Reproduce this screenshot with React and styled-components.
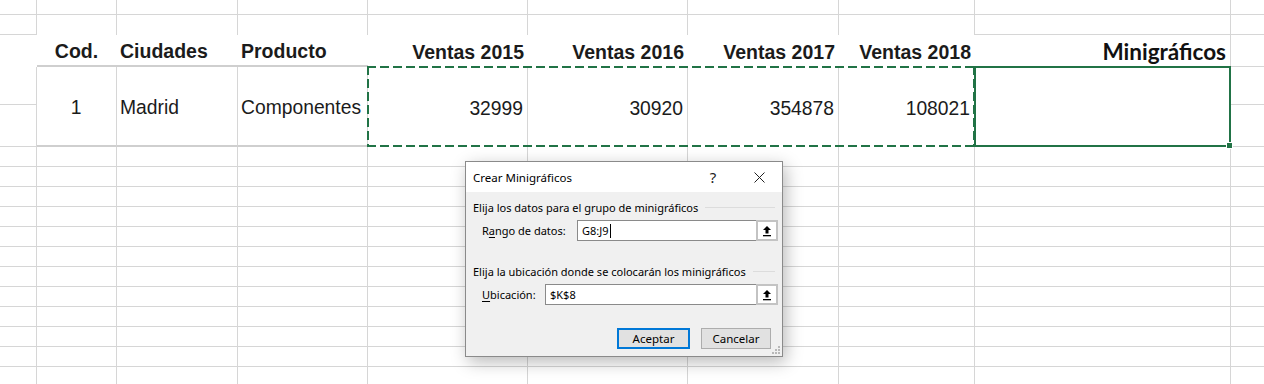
import React from "react";
import styled, { createGlobalStyle } from "styled-components";

const LINE = "#d6d6d6";
const THICK = "#cfcfcf";
const GREEN = "#217346";

const GlobalStyle = createGlobalStyle`
  body {
    margin: 0;
    background: #fff;
    overflow: hidden;
  }
`;

const Page = styled.div`
  position: relative;
  width: 1264px;
  height: 384px;
  overflow: hidden;
  font-family: "Liberation Sans", Arial, sans-serif;
  color: #1b1b1b;
`;

const Sheet = styled.div`
  display: grid;
  grid-template-columns: 37px 80px 121px 130px 160px 160px 151px 136px 256px 1fr;
  grid-template-rows: 15px 20px 32px 38px 42px repeat(12, 20px);
`;

const bottoms = {
  none: "0",
  thin: `1px solid ${LINE}`,
  thick: `2px solid ${THICK}`,
};

const justify = { left: "flex-start", center: "center", right: "flex-end" };

const Cell = styled.div`
  box-sizing: border-box;
  grid-column: ${(p) => p.$col} / span ${(p) => p.$cs || 1};
  grid-row: ${(p) => p.$row} / span ${(p) => p.$rs || 1};
  border-right: ${(p) => (p.$right ? `1px solid ${LINE}` : "0")};
  border-bottom: ${(p) => bottoms[p.$bottom || "none"]};
  display: flex;
  align-items: center;
  justify-content: ${(p) => justify[p.$align || "left"]};
  padding: 0 4px 0 3px;
  min-width: 0;
  white-space: nowrap;
`;

const HeadCell = styled(Cell)`
  font-size: 19.5px;
  font-weight: 700;
  padding-top: 2px;
`;

const ValueCell = styled(Cell)`
  font-size: 19.3px;
  padding-top: 4px;
`;

const ChartHead = styled(Cell)`
  font-family: Lato, "Open Sans", sans-serif;
  font-size: 22.5px;
  font-weight: 700;
  color: #111;
  padding-top: 1px;
`;

const dash = (dir) =>
  `repeating-linear-gradient(${dir}, ${GREEN} 0 9px, transparent 9px 13px)`;

const CopyRange = styled.div`
  grid-column: 5 / span 4;
  grid-row: 4 / span 2;
  margin: -1px 0 0 -1px;
  background: ${dash("90deg")} top left / 100% 2px no-repeat,
    ${dash("90deg")} bottom left / 100% 2px no-repeat,
    ${dash("180deg")} top left / 2px 100% no-repeat,
    ${dash("180deg")} top right / 2px 100% no-repeat;
`;

const Selected = styled.div`
  position: relative;
  box-sizing: border-box;
  grid-column: 9;
  grid-row: 4 / span 2;
  margin: -1px 0 0 -1px;
  border: 2px solid ${GREEN};
`;

const FillHandle = styled.span`
  position: absolute;
  right: -4px;
  bottom: -4px;
  width: 5px;
  height: 5px;
  background: ${GREEN};
  border: 1px solid #fff;
`;

/* dialog */

const Dialog = styled.div`
  position: absolute;
  left: 465px;
  top: 161px;
  width: 318px;
  height: 196px;
  box-sizing: border-box;
  border: 1px solid #8a8a8a;
  background: #f0f0f0;
  box-shadow: 3px 5px 16px rgba(0, 0, 0, 0.28);
  display: flex;
  flex-direction: column;
  font-family: "Noto Sans", "Open Sans", sans-serif;
  font-size: 11px;
  color: #000;
`;

const TitleBar = styled.div`
  height: 30px;
  flex: none;
  background: #fff;
  display: flex;
  align-items: center;
  padding-left: 7px;
`;

const Title = styled.div`
  flex: 1;
  font-size: 11.5px;
  padding-top: 1px;
`;

const TitleButton = styled.div`
  width: 46px;
  height: 30px;
  display: flex;
  align-items: center;
  justify-content: center;
  font-size: 15px;
  color: #222;
`;

const Body = styled.div`
  flex: 1;
  display: flex;
  flex-direction: column;
  padding: 7px 4px 0 7px;
  position: relative;
`;

const Group = styled.div`
  display: flex;
  align-items: center;
  height: 16px;
  margin-top: ${(p) => p.$gap || 0}px;
  padding-right: 3px;

  &::after {
    content: "";
    flex: 1;
    height: 1px;
    margin-left: 7px;
    background: #dcdcdc;
  }
`;

const Row = styled.div`
  display: flex;
  align-items: center;
  height: 21px;
  margin-top: ${(p) => p.$gap}px;
  padding-left: 9px;
`;

const Label = styled.div`
  width: ${(p) => p.$w}px;
  flex: none;

  u {
    text-decoration: underline;
    text-underline-offset: 2px;
  }
`;

const Field = styled.div`
  flex: 1;
  height: 21px;
  box-sizing: border-box;
  border: 1px solid #8a8a8a;
  background: #fff;
  display: flex;
  align-items: center;
  padding-left: 4px;
`;

const FieldText = styled.span`
  flex: 1;
  display: flex;
  align-items: center;
`;

const Caret = styled.span`
  width: 1px;
  height: 14px;
  background: #000;
  margin-left: 1px;
`;

const RefButton = styled.div`
  width: 22px;
  height: 21px;
  box-sizing: border-box;
  margin: -1px -1px -1px 0;
  border: 2px solid #c3c3c3;
  background: #fff;
  display: flex;
  align-items: center;
  justify-content: center;
`;

const Buttons = styled.div`
  display: flex;
  justify-content: flex-end;
  gap: 11px;
  margin-top: 23px;
  padding-right: 7px;
`;

const Button = styled.div`
  width: ${(p) => p.$w}px;
  height: 21px;
  box-sizing: border-box;
  border: ${(p) => (p.$primary ? "2px solid #0078d7" : "1px solid #adadad")};
  background: #e1e1e1;
  display: flex;
  align-items: center;
  justify-content: center;
  font-size: 11.5px;
`;

const Grip = styled.svg`
  position: absolute;
  right: 1px;
  bottom: 1px;
`;

const UpArrow = () => (
  <svg width="10" height="12" viewBox="0 0 10 12">
    <path d="M5 1 L9 5 H6.5 V8.5 H3.5 V5 H1 Z" fill="#000" />
    <rect x="1" y="10" width="8" height="1.3" fill="#000" />
  </svg>
);

const CloseIcon = () => (
  <svg width="11" height="11" viewBox="0 0 11 11">
    <path d="M0.5 0.5 L10.5 10.5 M10.5 0.5 L0.5 10.5" stroke="#222" strokeWidth="1" />
  </svg>
);

const headers = [
  { col: 2, text: "Cod.", align: "center", bottom: "thick" },
  { col: 3, text: "Ciudades", bottom: "thick" },
  { col: 4, text: "Producto", bottom: "thick" },
  { col: 5, text: "Ventas 2015", align: "right" },
  { col: 6, text: "Ventas 2016", align: "right" },
  { col: 7, text: "Ventas 2017", align: "right" },
  { col: 8, text: "Ventas 2018", align: "right" },
];

const values = [
  { col: 2, text: "1", align: "center", bottom: "thick" },
  { col: 3, text: "Madrid", bottom: "thick" },
  { col: 4, text: "Componentes", bottom: "thick" },
  { col: 5, text: "32999", align: "right" },
  { col: 6, text: "30920", align: "right" },
  { col: 7, text: "354878", align: "right" },
  { col: 8, text: "108021", align: "right" },
];

const COLS = [1, 2, 3, 4, 5, 6, 7, 8, 9, 10];
const EMPTY_ROWS = [6, 7, 8, 9, 10, 11, 12, 13, 14, 15, 16, 17];

function App() {
  return (
    <Page>
      <GlobalStyle />
      <Sheet>
        {[1, 2].map((row) =>
          COLS.map((col) => (
            <Cell
              key={`t${row}-${col}`}
              $col={col}
              $row={row}
              $right={col < 10}
              $bottom={row === 2 && col >= 2 && col <= 8 ? "none" : "thin"}
            />
          ))
        )}

        {headers.map((h) => (
          <HeadCell key={h.text} $col={h.col} $row={3} $align={h.align} $bottom={h.bottom}>
            {h.text}
          </HeadCell>
        ))}
        <ChartHead $col={9} $row={3} $align="right" $right>
          Minigráficos
        </ChartHead>
        <Cell $col={10} $row={3} $bottom="thin" />

        <Cell $col={1} $row={4} $right $bottom="thin" />
        <Cell $col={1} $row={5} $right $bottom="thin" />
        {values.map((v) => (
          <ValueCell
            key={v.text}
            $col={v.col}
            $row={4}
            $rs={2}
            $align={v.align}
            $bottom={v.bottom}
            $right
          >
            {v.text}
          </ValueCell>
        ))}
        <Cell $col={10} $row={4} $bottom="thin" />
        <Cell $col={10} $row={5} $bottom="thin" />
        <CopyRange />
        <Selected>
          <FillHandle />
        </Selected>

        {EMPTY_ROWS.map((row) =>
          COLS.map((col) => (
            <Cell key={`r${row}-${col}`} $col={col} $row={row} $right={col < 10} $bottom="thin" />
          ))
        )}
      </Sheet>

      <Dialog>
        <TitleBar>
          <Title>Crear Minigráficos</Title>
          <TitleButton>?</TitleButton>
          <TitleButton>
            <CloseIcon />
          </TitleButton>
        </TitleBar>
        <Body>
          <Group>Elija los datos para el grupo de minigráficos</Group>
          <Row $gap={5}>
            <Label $w={95}>
              R<u>a</u>ngo de datos:
            </Label>
            <Field>
              <FieldText>
                G8:J9
                <Caret />
              </FieldText>
              <RefButton>
                <UpArrow />
              </RefButton>
            </Field>
          </Row>

          <Group $gap={22}>Elija la ubicación donde se colocarán los minigráficos</Group>
          <Row $gap={5}>
            <Label $w={63}>
              <u>U</u>bicación:
            </Label>
            <Field>
              <FieldText>$K$8</FieldText>
              <RefButton>
                <UpArrow />
              </RefButton>
            </Field>
          </Row>

          <Buttons>
            <Button $w={73} $primary>
              Aceptar
            </Button>
            <Button $w={70}>Cancelar</Button>
          </Buttons>
          <Grip width="10" height="10" viewBox="0 0 10 10">
            {[
              [8, 2],
              [8, 5],
              [5, 5],
              [8, 8],
              [5, 8],
              [2, 8],
            ].map(([x, y]) => (
              <rect key={`${x}-${y}`} x={x - 1} y={y - 1} width="2" height="2" fill="#b8b8b8" />
            ))}
          </Grip>
        </Body>
      </Dialog>
    </Page>
  );
}

export default App;
